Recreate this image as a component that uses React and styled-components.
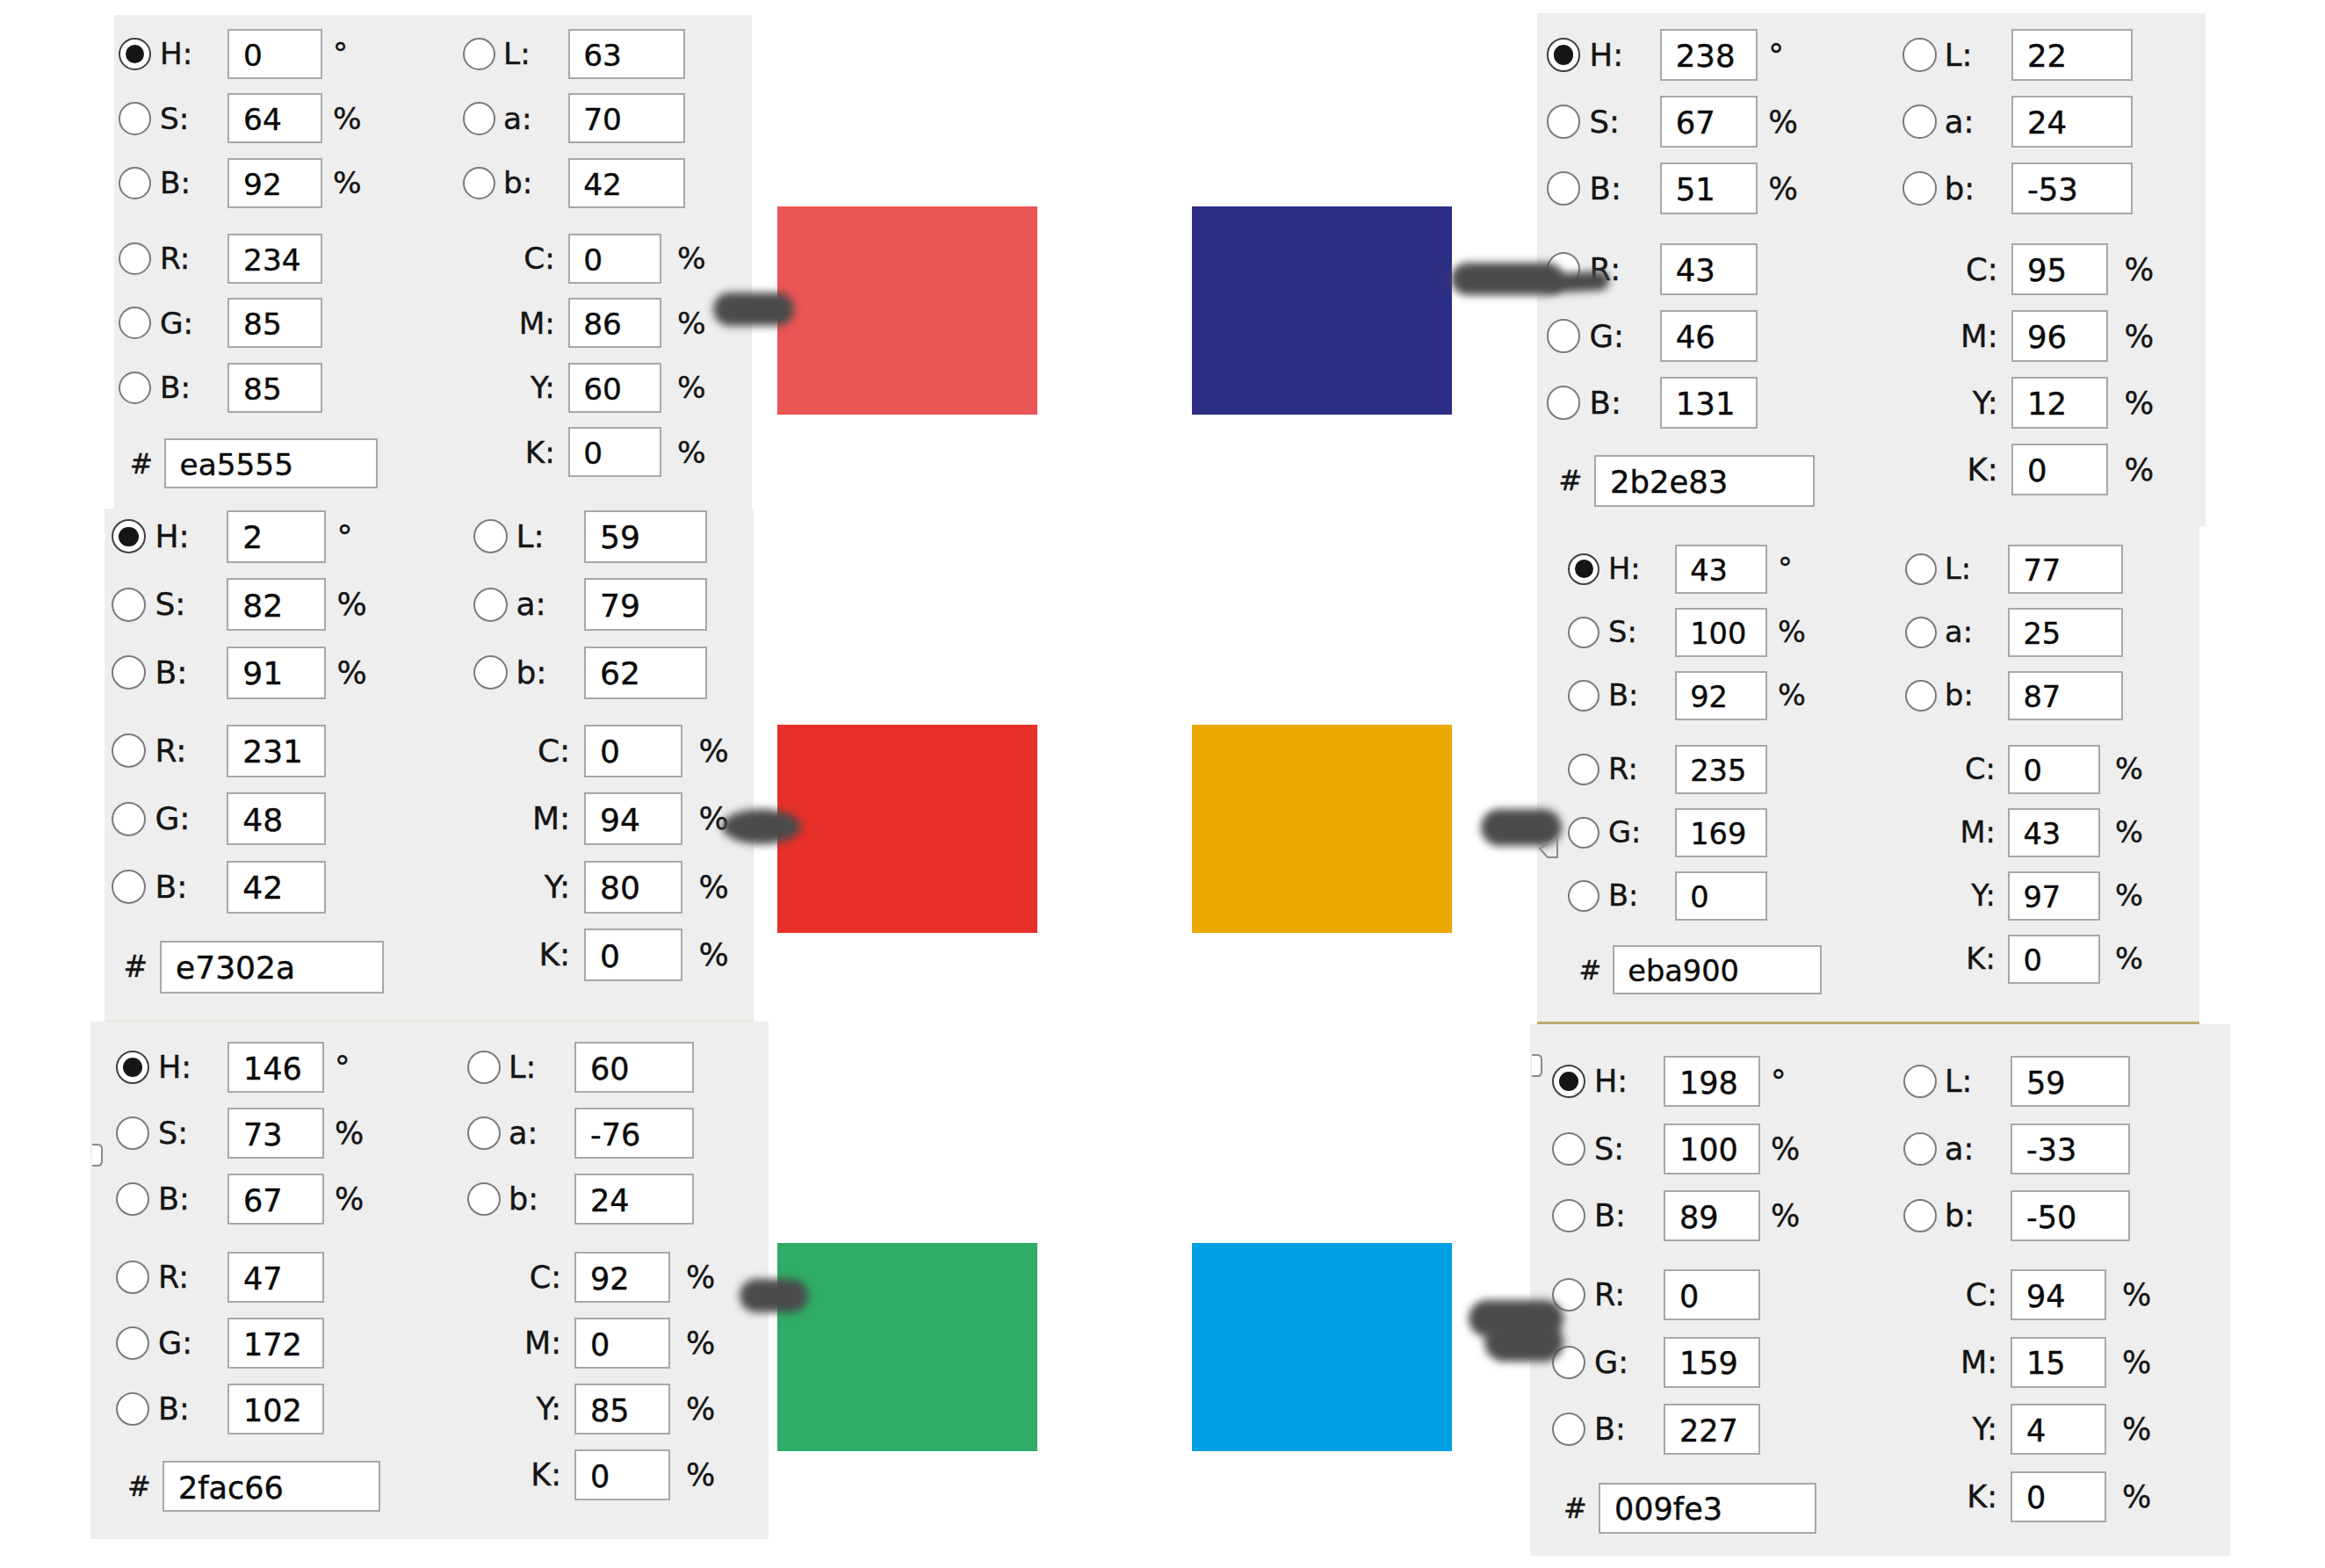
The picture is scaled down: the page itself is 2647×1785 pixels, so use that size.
import React from 'react';
import styled, { createGlobalStyle } from 'styled-components';

const GlobalStyle = createGlobalStyle`
  html, body {
    margin: 0;
    padding: 0;
    background: #ffffff;
  }
  body {
    width: 2647px;
    height: 1785px;
    overflow: hidden;
    font-family: "DejaVu Sans", "Liberation Sans", sans-serif;
  }
`;

const Page = styled.div`
  position: relative;
  display: flex;
  width: 2647px;
  height: 1785px;
`;

const Stack = styled.div`
  box-sizing: border-box;
  display: flex;
  flex-direction: column;
  flex: none;
  width: ${p => p.$w}px;
  padding-top: ${p => p.$top}px;
`;

const Panel = styled.section`
  --s: ${p => p.$s};
  --pitch: ${p => p.$pitch}px;
  --extra: ${p => p.$extra}px;
  box-sizing: border-box;
  display: flex;
  flex: none;
  width: ${p => p.$w}px;
  height: ${p => p.$h}px;
  margin-left: ${p => p.$x}px;
  padding: ${p => p.$pt}px 0 0 ${p => p.$pl}px;
  background: #eeeeee;
  border-bottom: ${p => (p.$line ? p.$line : 'none')};
  overflow: hidden;
`;

const Column = styled.div`
  display: flex;
  flex-direction: column;
  flex: none;
  gap: calc(var(--pitch) - 58px * var(--s));
  width: ${p => (p.$first ? 'calc(400px * var(--s))' : 'auto')};
`;

const Row = styled.div`
  display: flex;
  align-items: center;
  height: calc(58px * var(--s));
  margin-top: ${p => (p.$push === 'group' ? 'var(--extra)' : p.$push === 'hex' ? 'calc(13px * var(--s))' : '0')};
`;

const Radio = styled.span`
  box-sizing: border-box;
  flex: none;
  display: flex;
  align-items: center;
  justify-content: center;
  width: calc(38px * var(--s));
  height: calc(38px * var(--s));
  border-radius: 50%;
  border: 2px solid ${p => (p.$on ? '#404040' : '#7c7c7c')};
  background: #ffffff;

  &::after {
    content: '';
    display: ${p => (p.$on ? 'block' : 'none')};
    width: calc(22px * var(--s));
    height: calc(22px * var(--s));
    border-radius: 50%;
    background: #161616;
  }
`;

const Label = styled.span`
  flex: none;
  width: calc(${p => p.$w}px * var(--s));
  margin-left: calc(${p => p.$ml || 0}px * var(--s));
  text-align: ${p => (p.$right ? 'right' : 'left')};
  font-size: calc(35px * var(--s));
  color: #141414;
  -webkit-text-stroke: 0.4px #141414;
`;

const Hash = styled.span`
  box-sizing: border-box;
  flex: none;
  width: calc(53px * var(--s));
  padding-left: calc(13px * var(--s));
  font-size: calc(32px * var(--s));
  color: #141414;
  -webkit-text-stroke: 0.4px #141414;
`;

const Box = styled.span`
  box-sizing: border-box;
  flex: none;
  display: flex;
  align-items: center;
  width: calc(${p => p.$w}px * var(--s));
  height: 100%;
  margin-left: calc(${p => p.$ml || 0}px * var(--s));
  padding-left: calc(16px * var(--s));
  padding-top: 3px;
  background: #ffffff;
  border: 2px solid #a8a8a8;
  font-size: calc(35px * var(--s));
  color: #0a0a0a;
  -webkit-text-stroke: 0.4px #0a0a0a;
`;

const Unit = styled.span`
  flex: none;
  margin-left: calc(${p => p.$ml}px * var(--s));
  font-size: calc(35px * var(--s));
  color: #141414;
  -webkit-text-stroke: 0.4px #141414;
`;

const SwatchGrid = styled.div`
  box-sizing: border-box;
  display: grid;
  flex: none;
  width: 857px;
  grid-template-columns: 296px 296px;
  grid-auto-rows: 237px;
  column-gap: 176px;
  row-gap: 353px;
  align-content: start;
  padding-top: 235px;
`;

const Swatch = styled.div`
  background: ${p => p.$c};
`;

const Smudge = styled.div`
  position: absolute;
  left: ${p => p.$x}px;
  top: ${p => p.$y}px;
  width: ${p => p.$w}px;
  height: ${p => p.$h}px;
  border-radius: ${p => (p.$oval ? '50%' : `${p.$h / 2}px`)};
  background: #4b4b4b;
  filter: blur(5px);
  transform: rotate(${p => p.$r || 0}deg);
  pointer-events: none;
`;

const Mark = styled.svg`
  position: absolute;
  left: ${p => p.$x}px;
  top: ${p => p.$y}px;
  pointer-events: none;
`;

const leftPanels = [
  { x: 130, w: 726, h: 562, pt: 16, pl: 5, s: 0.98, pitch: 73.5, extra: 12.5,
    v: { H: '0', S: '64', Bb: '92', L: '63', a: '70', b: '42', R: '234', G: '85', B: '85', C: '0', M: '86', Y: '60', K: '0', hex: 'ea5555' } },
  { x: 119, w: 739, h: 584, pt: 2, pl: 8, s: 1.03, pitch: 77.5, extra: 11.5, line: '1px solid #e2dccb',
    v: { H: '2', S: '82', Bb: '91', L: '59', a: '79', b: '62', R: '231', G: '48', B: '42', C: '0', M: '94', Y: '80', K: '0', hex: 'e7302a' } },
  { x: 103, w: 772, h: 589, pt: 23, pl: 29, s: 1.0, pitch: 75, extra: 14,
    v: { H: '146', S: '73', Bb: '67', L: '60', a: '-76', b: '24', R: '47', G: '172', B: '102', C: '92', M: '0', Y: '85', K: '0', hex: '2fac66' } },
];

const rightPanels = [
  { x: 8, w: 761, h: 584, pt: 18, pl: 11, s: 1.013, pitch: 76, extra: 16,
    v: { H: '238', S: '67', Bb: '51', L: '22', a: '24', b: '-53', R: '43', G: '46', B: '131', C: '95', M: '96', Y: '12', K: '0', hex: '2b2e83' } },
  { x: 8, w: 754, h: 567, pt: 21, pl: 35, s: 0.96, pitch: 72, extra: 12, line: '3px solid #bfa872',
    v: { H: '43', S: '100', Bb: '92', L: '77', a: '25', b: '87', R: '235', G: '169', B: '0', C: '0', M: '43', Y: '97', K: '0', hex: 'eba900' } },
  { x: 0, w: 797, h: 605, pt: 36, pl: 25, s: 1.0, pitch: 76.5, extra: 13.5,
    v: { H: '198', S: '100', Bb: '89', L: '59', a: '-33', b: '-50', R: '0', G: '159', B: '227', C: '94', M: '15', Y: '4', K: '0', hex: '009fe3' } },
];

const swatches = ['#ea5555', '#2b2e83', '#e7302a', '#eba900', '#2fac66', '#009fe3'];

// finger smudges left on the screenshot, drawn over the panels
const smudges = [
  { x: 812, y: 333, w: 92, h: 38 },
  { x: 1652, y: 299, w: 128, h: 37 },
  { x: 1760, y: 310, w: 72, h: 22, r: -3 },
  { x: 822, y: 921, w: 90, h: 40, oval: true },
  { x: 1686, y: 921, w: 92, h: 42 },
  { x: 1672, y: 1480, w: 108, h: 42 },
  { x: 1690, y: 1506, w: 90, h: 44 },
  { x: 842, y: 1456, w: 78, h: 38 },
];

const HsbRow = ({ label, value, unit, on, push }) => (
  <Row $push={push}>
    <Radio $on={on} />
    <Label $w={79} $ml={10}>{label}:</Label>
    <Box $w={110}>{value}</Box>
    {unit && <Unit $ml={12}>{unit}</Unit>}
  </Row>
);

const LabRow = ({ label, value }) => (
  <Row>
    <Radio />
    <Label $w={75} $ml={9}>{label}:</Label>
    <Box $w={136}>{value}</Box>
  </Row>
);

const CmykRow = ({ label, value, push }) => (
  <Row $push={push}>
    <Label $w={107} $right>{label}:</Label>
    <Box $w={109} $ml={15}>{value}</Box>
    <Unit $ml={18}>%</Unit>
  </Row>
);

const ColorPanel = ({ x, w, h, pt, pl, s, pitch, extra, line, v }) => (
  <Panel $x={x} $w={w} $h={h} $pt={pt} $pl={pl} $s={s} $pitch={pitch} $extra={`${extra}`} $line={line}>
    <Column $first>
      <HsbRow label="H" value={v.H} unit="°" on />
      <HsbRow label="S" value={v.S} unit="%" />
      <HsbRow label="B" value={v.Bb} unit="%" />
      <HsbRow label="R" value={v.R} push="group" />
      <HsbRow label="G" value={v.G} />
      <HsbRow label="B" value={v.B} />
      <Row $push="hex">
        <Hash>#</Hash>
        <Box $w={248}>{v.hex}</Box>
      </Row>
    </Column>
    <Column>
      <LabRow label="L" value={v.L} />
      <LabRow label="a" value={v.a} />
      <LabRow label="b" value={v.b} />
      <CmykRow label="C" value={v.C} push="group" />
      <CmykRow label="M" value={v.M} />
      <CmykRow label="Y" value={v.Y} />
      <CmykRow label="K" value={v.K} />
    </Column>
  </Panel>
);

export default function App() {
  return (
    <>
      <GlobalStyle />
      <Page>
        <Stack $w={885} $top={17}>
          {leftPanels.map((p, i) => <ColorPanel key={i} {...p} />)}
        </Stack>

        <SwatchGrid>
          {swatches.map(c => <Swatch key={c} $c={c} />)}
        </SwatchGrid>

        <Stack $w={905} $top={15}>
          {rightPanels.map((p, i) => <ColorPanel key={i} {...p} />)}
        </Stack>

        {smudges.map((m, i) => (
          <Smudge key={i} $x={m.x} $y={m.y} $w={m.w} $h={m.h} $r={m.r} $oval={m.oval} />
        ))}

        {/* stray cursor outlines left in the screenshot */}
        <Mark $x={102} $y={1300} width="18" height="30" viewBox="0 0 18 30">
          <path d="M3 3 H9 Q14 3 14 8 V22 Q14 27 9 27 H3" fill="#fff" stroke="#8a8a8a" strokeWidth="2" />
        </Mark>
        <Mark $x={1741} $y={1198} width="18" height="30" viewBox="0 0 18 30">
          <path d="M3 3 H9 Q14 3 14 8 V22 Q14 27 9 27 H3" fill="#fff" stroke="#8a8a8a" strokeWidth="2" />
        </Mark>
        <Mark $x={1749} $y={951} width="28" height="28" viewBox="0 0 28 28">
          <path d="M24 2 L4 15 L13 25 L24 25 Z" fill="none" stroke="#8a8a8a" strokeWidth="2" strokeLinejoin="round" />
        </Mark>
      </Page>
    </>
  );
}
